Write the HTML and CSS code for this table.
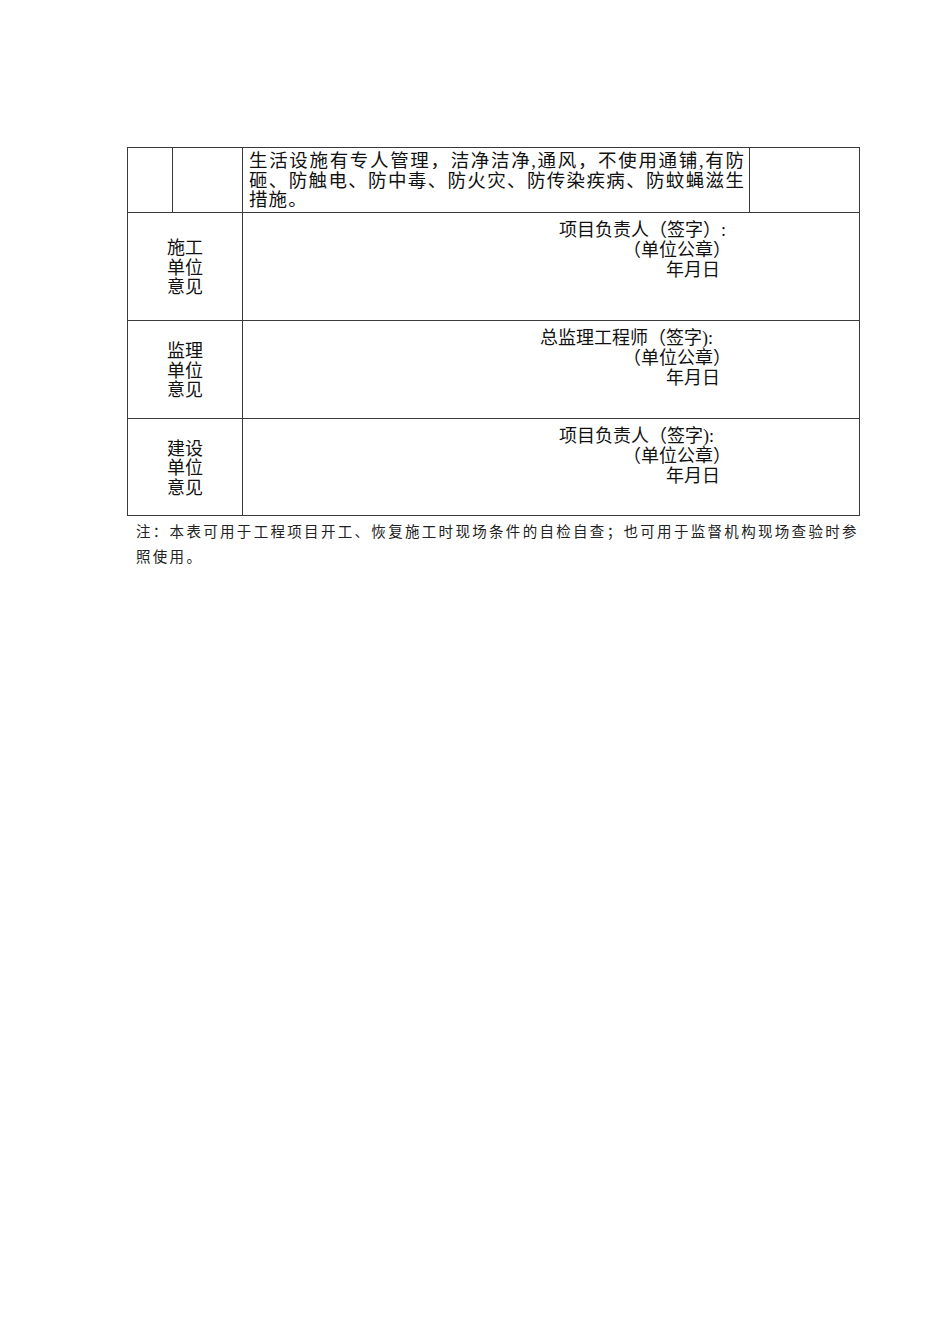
FILE: index.html
```html
<!DOCTYPE html>
<html lang="zh-CN">
<head>
<meta charset="utf-8">
<title>现场条件自检表</title>
<link rel="stylesheet" href="styles.css">
</head>
<body>
<div class="page">
  <table class="form">
    <colgroup>
      <col class="c-a">
      <col class="c-b">
      <col class="c-c">
      <col class="c-d">
    </colgroup>
    <tr class="r-item">
      <td></td>
      <td></td>
      <td class="item-text">生活设施有专人管理，洁净洁净,通风，不使用通铺,有防砸、防触电、防中毒、防火灾、防传染疾病、防蚊蝇滋生措施。</td>
      <td></td>
    </tr>
    <tr class="r-sign r-build">
      <td class="label" colspan="2">施工<br>单位<br>意见</td>
      <td class="sign" colspan="2">
        <div class="s1">项目负责人（签字）:</div>
        <div class="s2">（单位公章）</div>
        <div class="s3">年月日</div>
      </td>
    </tr>
    <tr class="r-sign r-super">
      <td class="label" colspan="2">监理<br>单位<br>意见</td>
      <td class="sign" colspan="2">
        <div class="s1 s1-wide">总监理工程师（签字):</div>
        <div class="s2">（单位公章）</div>
        <div class="s3">年月日</div>
      </td>
    </tr>
    <tr class="r-sign r-owner">
      <td class="label" colspan="2">建设<br>单位<br>意见</td>
      <td class="sign" colspan="2">
        <div class="s1">项目负责人（签字):</div>
        <div class="s2">（单位公章）</div>
        <div class="s3">年月日</div>
      </td>
    </tr>
  </table>
  <p class="note">注：本表可用于工程项目开工、恢复施工时现场条件的自检自查；也可用于监督机构现场查验时参照使用。</p>
</div>
</body>
</html>
```

FILE: styles.css
```css
html, body {
  margin: 0;
  padding: 0;
  background: #ffffff;
}

body {
  font-family: "Liberation Serif", "Noto Sans CJK SC", serif;
  color: #111111;
}

.page {
  padding-top: 147px;
  padding-left: 127px;
}

.form {
  border-collapse: collapse;
  table-layout: fixed;
  width: 732px;
}

.c-a { width: 45px; }
.c-b { width: 70px; }
.c-c { width: 507px; }
.c-d { width: 110px; }

.form td {
  box-sizing: border-box;
  border: 1px solid #3a3a3a;
  padding: 0;
  font-size: 18px;
  line-height: 20px;
}

.r-item { height: 65px; }
.r-build { height: 108px; }
.r-super { height: 98px; }
.r-owner { height: 97px; }

.item-text {
  vertical-align: top;
  padding: 4px 4px 0 6px !important;
  font-size: 18.5px !important;
  line-height: 19.6px !important;
  letter-spacing: 1.1px;
  text-align: justify;
}

.label {
  text-align: center;
  vertical-align: middle;
  line-height: 19.5px !important;
  padding-top: 4px !important;
}

.sign {
  vertical-align: top;
  padding-top: 7px !important;
}

.s1 { margin-left: 316px; }
.s1-wide { margin-left: 297px; }
.s2 { margin-left: 380px; }
.s3 { margin-left: 423px; }

.note {
  margin: 2px 0 0 0;
  padding-left: 9px;
  width: 727px;
  font-family: "Noto Sans CJK SC", sans-serif;
  font-size: 14.5px;
  line-height: 25px;
  letter-spacing: 2.31px;
  color: #222222;
}
```
